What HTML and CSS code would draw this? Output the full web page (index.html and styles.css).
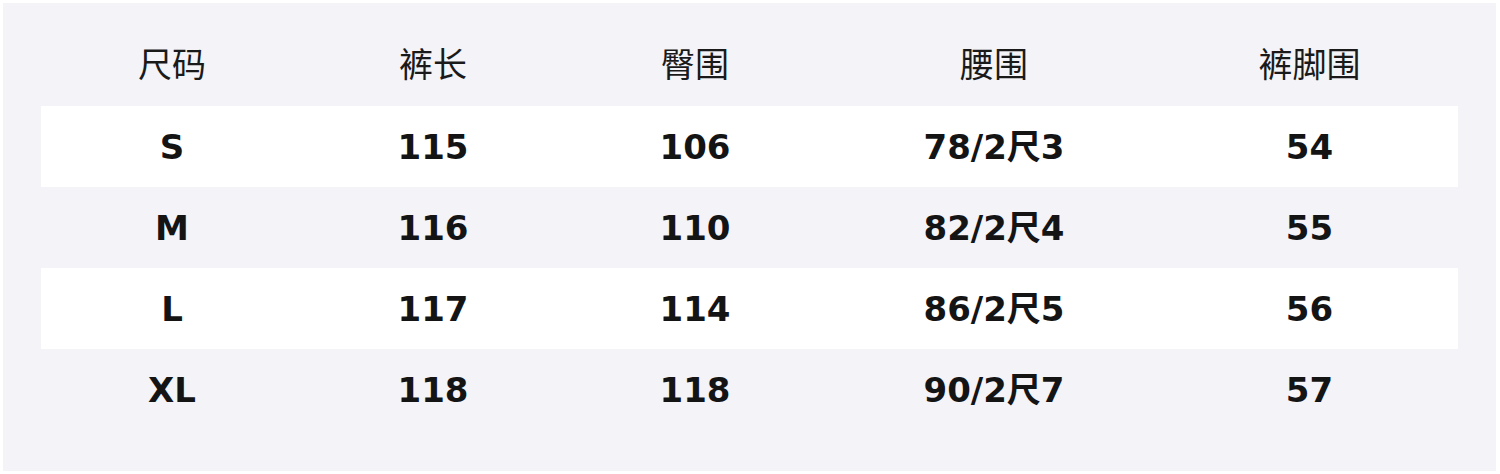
FILE: index.html
```html
<!DOCTYPE html>
<html lang="zh">
<head>
<meta charset="utf-8">
<title>尺码表</title>
<link rel="stylesheet" href="styles.css">
</head>
<body>
<div class="frame">
  <div class="panel">
    <div class="table">
      <div class="row head">
        <div class="cell">尺码</div><div class="cell">裤长</div><div class="cell">臀围</div><div class="cell">腰围</div><div class="cell">裤脚围</div>
      </div>
      <div class="row white">
        <div class="cell">S</div><div class="cell">115</div><div class="cell">106</div><div class="cell">78/2尺3</div><div class="cell">54</div>
      </div>
      <div class="row">
        <div class="cell">M</div><div class="cell">116</div><div class="cell">110</div><div class="cell">82/2尺4</div><div class="cell">55</div>
      </div>
      <div class="row white">
        <div class="cell">L</div><div class="cell">117</div><div class="cell">114</div><div class="cell">86/2尺5</div><div class="cell">56</div>
      </div>
      <div class="row">
        <div class="cell">XL</div><div class="cell">118</div><div class="cell">118</div><div class="cell">90/2尺7</div><div class="cell">57</div>
      </div>
    </div>
  </div>
</div>
</body>
</html>
```
FILE: styles.css
```css
html, body {
  margin: 0;
  padding: 0;
  background: #ffffff;
}
.frame {
  width: 1500px;
  height: 474px;
  padding: 3px 4px 3px 3px;
  box-sizing: border-box;
}
.panel {
  background: #f3f3f8;
  height: 468px;
  box-sizing: border-box;
  padding: 22px 38px 0 38px;
}
.table {
  display: flex;
  flex-direction: column;
  font-family: "DejaVu Sans", "Noto Sans CJK SC", sans-serif;
  color: #141414;
}
.row {
  display: grid;
  grid-template-columns: 262px 260px 264px 334px 297px;
  height: 81px;
  box-sizing: border-box;
  align-items: center;
  font-size: 34px;
  font-weight: bold;
}
.row.head {
  font-weight: normal;
  font-family: "Noto Sans CJK SC", "DejaVu Sans", sans-serif;
  color: #1a1a1a;
  padding-bottom: 6px;
}
.row.white {
  background: #ffffff;
}
.cell {
  text-align: center;
  white-space: nowrap;
  line-height: 40px;
}
```
